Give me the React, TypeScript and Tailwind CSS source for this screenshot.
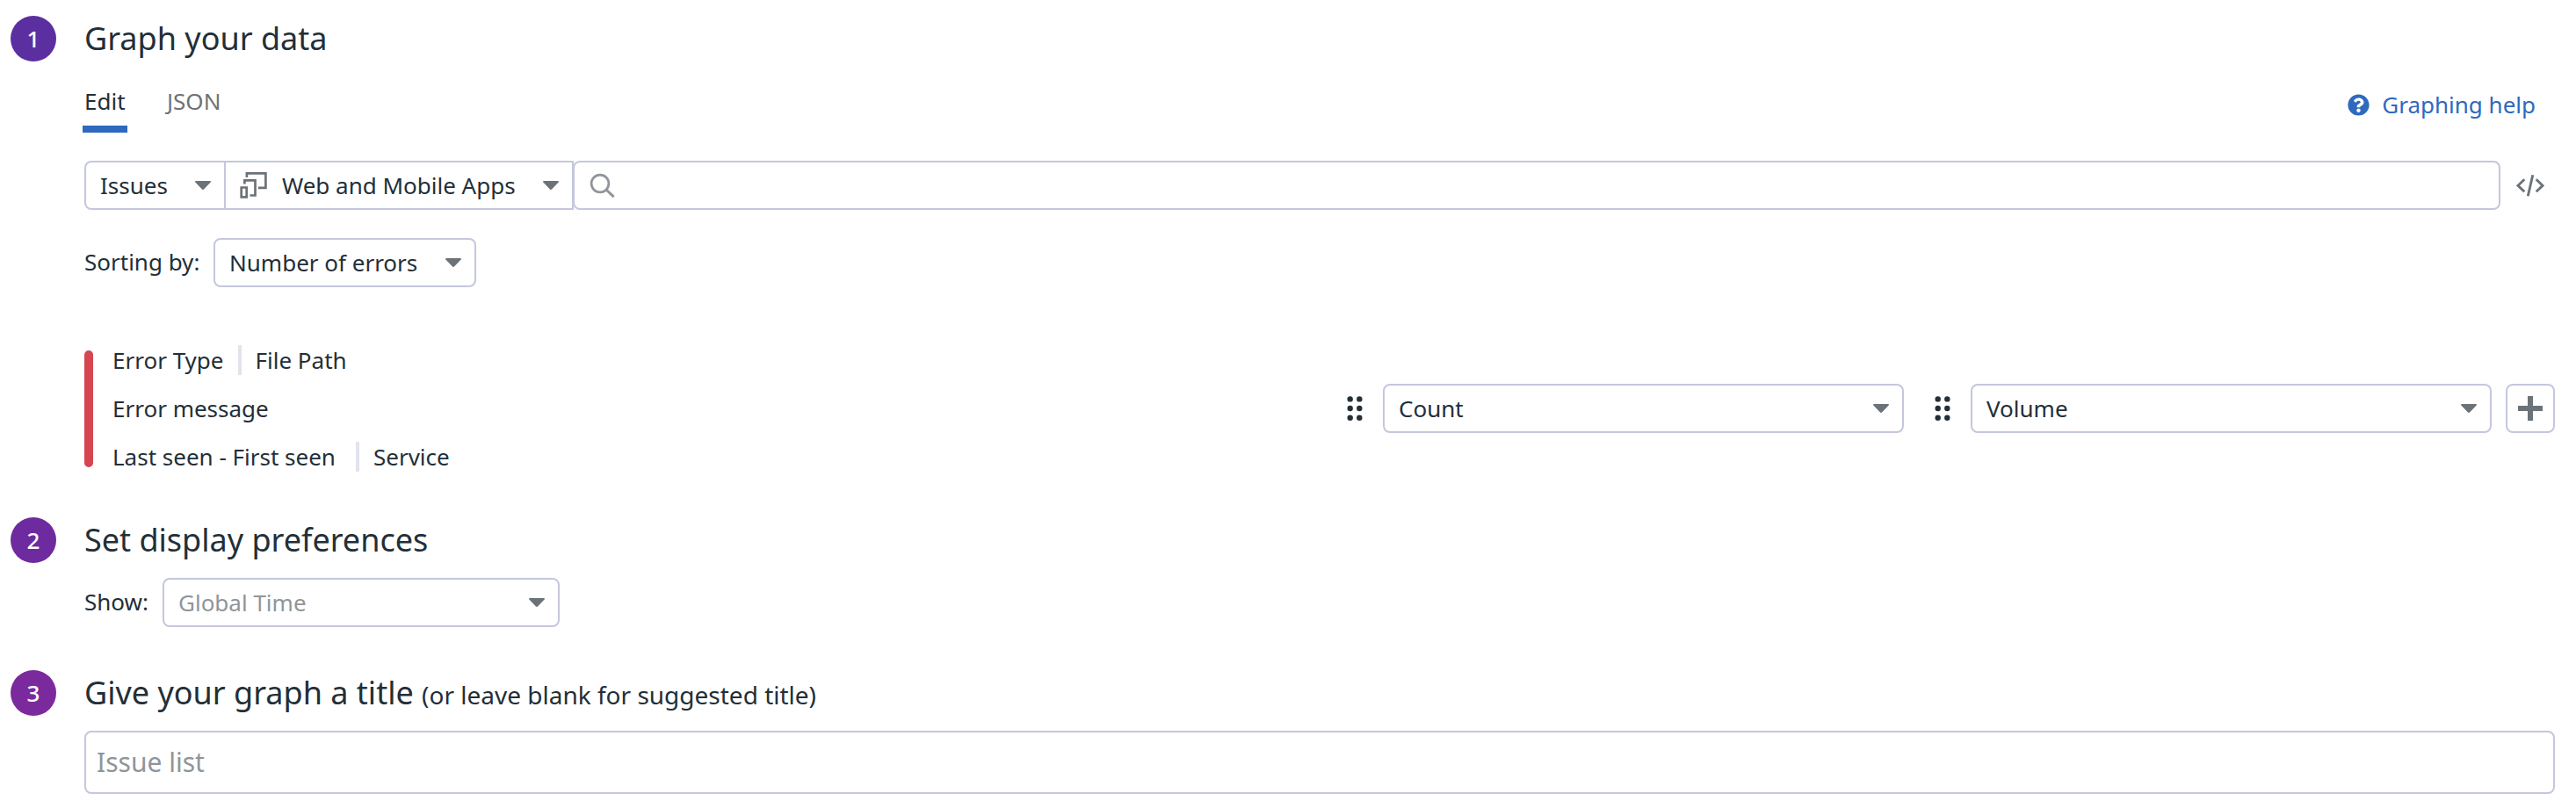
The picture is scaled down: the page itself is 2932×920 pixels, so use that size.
import type { ReactNode } from "react";
import { FaQuestionCircle } from "react-icons/fa";

const Caret = () => (
  <svg className="h-[10px] w-[18px] shrink-0" viewBox="0 0 18 10" fill="#6c7378">
    <path d="M1 0h16c1 0 1.3.9.7 1.6L10.300 9.300c-.8.900-1.800.900-2.600 0L.3 1.600C-.3.900 0 0 1 0z" />
  </svg>
);

const DragDots = () => (
  <svg className="h-7 w-[18px] shrink-0" viewBox="0 0 18 28" fill="#232f38">
    {[3.4, 14.0, 24.7].map((y) => (
      <g key={y}>
        <circle cx="3.7" cy={y} r="3.200" />
        <circle cx="14.3" cy={y} r="3.200" />
      </g>
    ))}
  </svg>
);

const DevicesIcon = () => (
  <svg className="h-[30px] w-[31px] shrink-0" viewBox="0 0 31 30" fill="none" stroke="#6c7378" strokeWidth="2.7">
    <path d="M7.900 6V1.400h21.500v16.400h-8.500" />
    <path d="M5.400 13.500V9.300h12.100v17.200h-6" />
    <path d="M1.700 17.500h6v10.900h-6z" />
  </svg>
);

const SearchIcon = () => (
  <svg className="h-7 w-[29px] shrink-0" viewBox="0 0 29 28" fill="none" stroke="#8f959a" strokeWidth="2.7">
    <circle cx="12" cy="12" r="9.900" />
    <path d="M19 19l8.600 8.200" strokeWidth="3" />
  </svg>
);

const CodeIcon = () => (
  <svg className="h-[25px] w-8 shrink-0" viewBox="0 0 32 25" fill="none" stroke="#6c7378" strokeWidth="2.900">
    <path d="M9.300 5.300L2 12.300l7.300 7M22.700 5.300l7.300 7-7.300 7" />
    <path d="M18.800.3L13.300 24.300" />
  </svg>
);

const Step = ({ n, color }: { n: number; color: string }) => (
  <div className={`flex h-[52px] w-[52px] shrink-0 items-center justify-center rounded-full text-[26px] font-medium text-white ${color}`}>
    {n}
  </div>
);

const Select = ({ children, className = "" }: { children: ReactNode; className?: string }) => (
  <div className={`flex h-14 shrink-0 items-center justify-between border-2 border-[#c4c7dd] bg-white pr-[15px] pl-4 ${className}`}>
    {children}
    <Caret />
  </div>
);

export default function App() {
  return (
    <main className="flex h-[920px] w-[2932px] flex-col overflow-hidden bg-white pr-6 pl-3 font-['Noto_Sans',sans-serif] text-[26px] leading-[36px] whitespace-nowrap text-[#232f38]">
      <section className="flex gap-8 pt-[18px]">
        <Step n={1} color="bg-[#5c2fa0]" />
        <div className="min-w-0 grow">
          <h2 className="text-[36px] leading-[52px]">Graph your data</h2>
          <div className="mt-[27px] flex h-[54px] justify-between">
            <nav className="flex">
              <div className="-ml-[2px] h-[54px] w-[51px] border-b-8 border-[#2d69bf] pl-[2px]">Edit</div>
              <div className="ml-[45px] text-[#6c7378]">JSON</div>
            </nav>
            <a className="mt-1 mr-[22px] flex h-9 items-center gap-[14px] text-[#2d69bf]">
              <FaQuestionCircle className="h-[25px] w-[25px] shrink-0" />
              Graphing help
            </a>
          </div>
          <div className="mt-8 flex items-center">
            <Select className="w-[161px] rounded-l-lg">Issues</Select>
            <Select className="-ml-[2px] w-[398px]">
              <span className="flex items-center gap-[17px]">
                <DevicesIcon />
                Web and Mobile Apps
              </span>
            </Select>
            <div className="-ml-px flex h-14 grow items-center rounded-lg border-2 border-[#c4c7dd] bg-white pl-[17px]">
              <SearchIcon />
            </div>
            <div className="mr-3 ml-[18px] flex">
              <CodeIcon />
            </div>
          </div>
          <div className="mt-8 flex items-center">
            <span className="w-[147px] pb-[2px]">Sorting by:</span>
            <Select className="w-[299px] rounded-lg">Number of errors</Select>
          </div>
          <div className="mt-[65px] flex h-[146px] items-center">
            <div className="h-[133px] w-[10px] rounded-full bg-[#d64550]" />
            <div className="ml-[22px] flex grow flex-col gap-[19px]">
              <div className="flex items-center">
                Error Type
                <i className="mr-[16px] ml-[16px] h-[34px] w-1 bg-[#e1e4ed]" />
                File Path
              </div>
              <div>Error message</div>
              <div className="flex items-center">
                Last seen - First seen
                <i className="mr-[16px] ml-[23px] h-[34px] w-1 bg-[#e1e4ed]" />
                Service
              </div>
            </div>
            <DragDots />
            <Select className="ml-[23px] w-[593px] rounded-lg">Count</Select>
            <div className="ml-[35px] flex">
              <DragDots />
            </div>
            <Select className="ml-[23px] w-[593px] rounded-lg">Volume</Select>
            <div className="ml-4 flex h-14 w-14 items-center justify-center rounded-lg border-2 border-[#c4c7dd]">
              <svg className="h-7 w-7" viewBox="0 0 28 28" stroke="#6c7378" strokeWidth="6">
                <path d="M14 0v28M0 14h28" />
              </svg>
            </div>
          </div>
        </div>
      </section>

      <section className="mt-[51px] flex gap-8">
        <Step n={2} color="bg-[#6d2b9f]" />
        <div>
          <h2 className="text-[36px] leading-[52px]">Set display preferences</h2>
          <div className="mt-[17px] flex items-center">
            <span className="w-[89px] pb-[2px]">Show:</span>
            <Select className="w-[452px] rounded-lg">
              <span className="text-[#8f959a]">Global Time</span>
            </Select>
          </div>
        </div>
      </section>

      <section className="mt-[49px] flex gap-8">
        <Step n={3} color="bg-[#7b2a9d]" />
        <div className="grow">
          <h2 className="text-[36px] leading-[52px]">
            Give your graph a title <span className="text-[28px] leading-none">(or leave blank for suggested title)</span>
          </h2>
          <div className="mt-[17px] flex h-[72px] items-center rounded-lg border-2 border-[#c4c7dd] pl-3 text-[30px] text-[#8f959a]">
            Issue list
          </div>
        </div>
      </section>
    </main>
  );
}
